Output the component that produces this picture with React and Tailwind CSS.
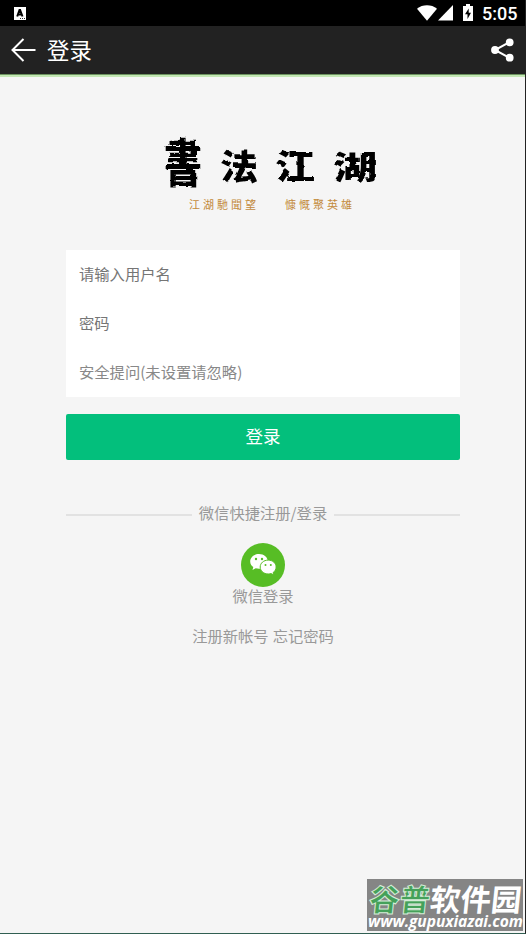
const logoChars = [
  { char: "書", className: "ml-[162px] w-[42px] text-[38px] scale-y-[1.34] -translate-y-[3px]" },
  { char: "法", className: "ml-[15px] w-[40px] text-[38px] scale-y-[0.92] translate-y-px" },
  { char: "江", className: "ml-[15px] w-[42px] text-[40px] scale-y-[0.84] translate-y-px" },
  { char: "湖", className: "ml-[17px] w-[44px] text-[44px] scale-y-[0.72] translate-y-px" }
];

const fields = [
  { type: "text", placeholder: "请输入用户名", className: "placeholder:text-[#757575]" },
  { type: "password", placeholder: "密码", className: "placeholder:text-[#757575]" },
  { type: "text", placeholder: "安全提问(未设置请忽略)", className: "placeholder:text-[#888]" }
];

function StatusBar() {
  return (
    <div className="flex h-[26px] shrink-0 items-center bg-black text-white">
      <svg className="ml-[14px] h-[13px] w-[12px]" viewBox="0 0 12 13">
        <path fill="#fff" d="M0 0h12v13H0z" />
        <path fill="none" stroke="#000" strokeWidth="2" d="M3.2 9.500 5.500 3h.6l2.400 6.500M4 7.400h3.600" />
        <path stroke="#333" strokeWidth="1" strokeDasharray="1 1" d="M6 11.500h5" />
      </svg>
      <svg className="ml-auto h-[16px] w-[20px]" viewBox="0 0 20 16">
        <path fill="#fff" d="M0 3.700C5.600-.9 14.400-.9 20 3.700L10 15.800z" />
      </svg>
      <svg className="ml-px h-[16px] w-[15px]" viewBox="0 0 15 16">
        <path fill="#fff" d="M15 0v15.500H0z" />
      </svg>
      <svg className="-mt-[2px] ml-[10px] h-[17px] w-[10px]" viewBox="0 0 10 17">
        <path fill="#fff" d="M3 0h4v2h3v15H0V2h3z" />
        <path fill="#000" d="M5.700 4.500 2 10.200h2.500V15L8 8.800H5.700z" />
      </svg>
      <span className="mr-[9px] ml-[9px] w-[34px] pt-[2px] font-['Roboto',sans-serif] text-[18px] leading-[26px] font-medium whitespace-nowrap">5:05</span>
    </div>
  );
}

function Header() {
  return (
    <header className="flex h-[51px] shrink-0 flex-col bg-[#222] text-white">
      <div className="flex h-[48px] items-center">
        <svg className="ml-[11px] h-[24px] w-[25px]" viewBox="0 0 25 24" fill="none" stroke="#fff" strokeWidth="2">
          <path d="M24.500 12H1.500M12.500 1 1.500 12l11 11" />
        </svg>
        <h1 className="-mt-[2px] ml-[11px] text-[22.400px] leading-[46px]">登录</h1>
        <svg className="mr-[11px] ml-auto h-[24px] w-[23px]" viewBox="0 0 23 24" fill="#fff" stroke="#fff" strokeWidth="2">
          <path fill="none" d="M18.500 4.200 4 12l14.500 7.800" />
          <circle cx="18.700" cy="4.300" r="2.900" />
          <circle cx="4" cy="12" r="2.900" />
          <circle cx="18.700" cy="19.700" r="2.900" />
        </svg>
      </div>
      <div className="h-px bg-[#6d9460]" />
      <div className="h-[2px] bg-[#c3e7b4]" />
    </header>
  );
}

function Logo() {
  return (
    <div>
      {/* roughens the glyph edges so they read as brush strokes */}
      <svg className="absolute h-0 w-0">
        <filter id="brush" x="-5%" y="-20%" width="110%" height="140%">
          <feTurbulence type="fractalNoise" baseFrequency="0.13" numOctaves="2" seed="4" result="noise" />
          <feDisplacementMap in="SourceGraphic" in2="noise" scale="3.500" xChannelSelector="R" yChannelSelector="G" result="rough" />
          <feGaussianBlur in="rough" stdDeviation="0.400" />
        </filter>
      </svg>
      <div className="flex h-[58px] items-center font-black text-black [filter:url(#brush)]">
        {logoChars.map((item) => (
          <span key={item.char} className={`block text-center leading-[58px] ${item.className}`}>
            {item.char}
          </span>
        ))}
      </div>
      <div className="mt-[3px] ml-[189px] flex h-[16px] gap-[26px] font-['Noto_Sans_CJK_TC',sans-serif] text-[11px] leading-[16px] tracking-[3px] text-[#c38a3c]">
        <span>江湖馳聞望</span>
        <span>慷慨聚英雄</span>
      </div>
    </div>
  );
}

function WechatIcon() {
  return (
    <svg className="h-11 w-11" viewBox="0 0 44 44">
      <circle cx="22" cy="22" r="22" fill="#57bd25" />
      <path fill="#fff" d="M18 11c-5 0-8.800 3.300-8.800 7.500 0 2.300 1.200 4.200 3.100 5.600l-.8 2.800 3.200-1.600c1.100.3 2.200.5 3.300.5 5 0 8.900-3.300 8.900-7.300S23 11 18 11z" />
      <path fill="#fff" stroke="#57bd25" strokeWidth="1" d="M27.200 17.100c-4.500 0-8 3-8 6.900s3.500 7 8 7c1 0 2-.2 2.900-.4l2.700 1.400-.7-2.400c1.800-1.300 3-3.200 3-5.600 0-3.900-3.500-6.900-7.900-6.900z" />
      <g fill="#57bd25">
        <circle cx="15" cy="16" r="1.200" />
        <circle cx="21" cy="16" r="1.200" />
        <circle cx="24.500" cy="22" r="1" />
        <circle cx="29.800" cy="22" r="1" />
      </g>
    </svg>
  );
}

function Watermark() {
  return (
    <div className="absolute top-[879px] left-[367px] h-[52px] w-[156px] bg-[#858585] text-white">
      <div className="flex h-[32px] w-[156px] -skew-x-6 items-center pt-[5px] pl-[3px] text-[30.400px] leading-[32px] font-black whitespace-nowrap">
        <span className="text-[#45a15a] [-webkit-text-stroke:1px_#d5ecd8]">谷普</span>
        <span className="font-bold">软件园</span>
      </div>
      <div className="mt-px ml-px h-[19px] font-['Open_Sans',sans-serif] text-[15.600px] leading-[19px] font-bold tracking-[-0.080px] whitespace-nowrap italic">www.gupuxiazai.com</div>
    </div>
  );
}

export default function App() {
  return (
    <div className="relative flex h-[934px] w-[526px] flex-col overflow-hidden border-r border-b border-r-[#222] border-b-[#315f52] bg-[#f5f5f5] font-['Noto_Sans_CJK_SC',sans-serif]">
      <StatusBar />
      <Header />

      <main className="pt-[58px]">
        <Logo />

        <form className="mx-[66px] mt-[38px] w-[394px]" onSubmit={(event) => event.preventDefault()}>
          <div className="h-[147px] bg-white">
            {fields.map((field) => (
              <input
                key={field.placeholder}
                className={`block h-[49px] w-full px-[13px] pb-[4px] text-[15.300px] outline-none ${field.className}`}
                placeholder={field.placeholder}
                type={field.type}
              />
            ))}
          </div>
          <button className="mt-[17px] block h-[46px] w-full rounded-[2px] bg-[#03bf7c] pb-[2px] text-[17.500px] text-white" type="submit">
            登录
          </button>
        </form>

        <div className="mx-[66px] mt-[42px] flex h-[23px] w-[394px] items-center text-[#999]">
          <span className="mt-[3px] h-[2px] flex-1 bg-[#e2e2e2]" />
          <span className="px-[7px] pb-[2px] text-[15.300px] leading-[21px]">微信快捷注册/登录</span>
          <span className="mt-[3px] h-[2px] flex-1 bg-[#e2e2e2]" />
        </div>

        <div className="mt-[18px] flex w-[526px] flex-col items-center text-[15.300px] text-[#999]">
          <WechatIcon />
          <span className="leading-[17px]">微信登录</span>
          <div className="mt-[21px] flex gap-1 leading-[20px]">
            <a href="#register">注册新帐号</a>
            <a href="#forgot">忘记密码</a>
          </div>
        </div>
      </main>

      <Watermark />
    </div>
  );
}
